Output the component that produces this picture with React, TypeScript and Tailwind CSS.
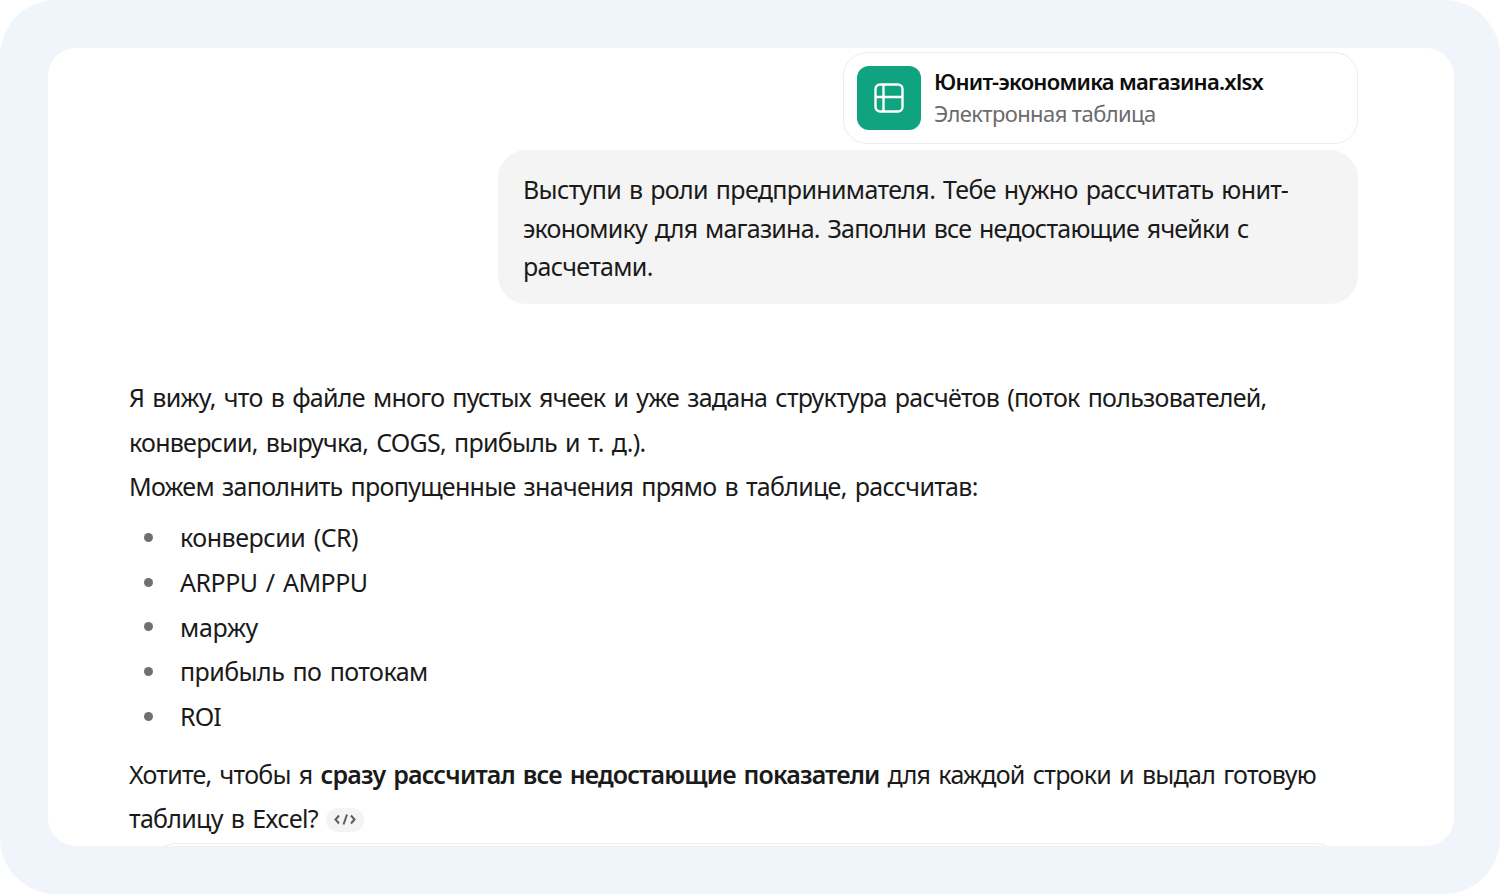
const items = [
  { text: "конверсии (CR)", cls: "tracking-[-0.46px]" },
  { text: "ARPPU / AMPPU", cls: "tracking-[-0.5px]" },
  { text: "маржу", cls: "tracking-[-0.3px]" },
  { text: "прибыль по потокам", cls: "tracking-[-0.55px]" },
  { text: "ROI", cls: "tracking-[-0.9px]" },
];

export default function App() {
  return (
    <div className="w-[1500px] h-[894px] bg-white overflow-hidden font-['Noto_Sans','Open_Sans',sans-serif] text-[#1a1a1a]">
      <div className="w-[1500px] h-[894px] rounded-[56px] bg-[#f0f5fb] pt-[48px] pl-[48px]">
        <div className="relative w-[1406px] h-[798px] rounded-[28px] bg-white overflow-hidden">
          <div className="flex flex-col items-end pr-[96px] pt-[4px]">
            <div className="w-[515px] h-[92px] rounded-[24px] border border-[#ececec] bg-white flex items-center pl-[13px] gap-[13px]">
              <div className="w-[64px] h-[64px] rounded-[12px] bg-[#10a37f] flex items-center justify-center">
                <svg width="32" height="32" viewBox="0 0 32 32" fill="none" stroke="#fff" strokeWidth="2.4">
                  <rect x="2.5" y="2.5" width="27" height="27" rx="4.5" />
                  <path d="M2.5 15H29.5M10.5 2.5V29.5" />
                </svg>
              </div>
              <div className="flex flex-col -mt-[2px]">
                <div className="text-[22px] leading-[32px] font-semibold tracking-[-0.73px] text-[#0d0d0d]">Юнит-экономика магазина.xlsx</div>
                <div className="text-[22px] leading-[32px] text-[#6b6b6b] tracking-[-0.6px]">Электронная таблица</div>
              </div>
            </div>
            <div className="w-[860px] h-[154px] mt-[6px] rounded-[28px] bg-[#f4f4f4] pl-[25px] pt-[20px] text-[25px] leading-[38.5px] [word-spacing:2px]">
              <span className="tracking-[-0.64px]">Выступи в роли предпринимателя. Тебе нужно рассчитать юнит-</span><br />
              <span className="tracking-[-0.77px]">экономику для магазина. Заполни все недостающие ячейки с</span><br />
              <span className="tracking-[-0.7px]">расчетами.</span>
            </div>
          </div>
          <div className="pl-[81px] pt-[71px] text-[25px] leading-[44.7px] tracking-[-0.72px] [word-spacing:2.3px]">
            <p>
              Я вижу, что в файле много пустых ячеек и уже задана структура расчётов (поток пользователей,<br />
              <span className="tracking-[-0.74px]">конверсии, выручка, COGS, прибыль и т. д.).</span><br />
              <span className="tracking-[-0.71px]">Можем заполнить пропущенные значения прямо в таблице, рассчитав:</span>
            </p>
            <ul className="mt-[6px]">
              {items.map((it) => (
                <li key={it.text} className={`flex items-center ${it.cls}`}>
                  <span className="w-[9px] h-[9px] ml-[15px] mr-[27px] rounded-full bg-[#707070]" />
                  <span>{it.text}</span>
                </li>
              ))}
            </ul>
            <p className="mt-[13px]">
              <span className="tracking-[-0.75px]">Хотите, чтобы я </span><b className="font-semibold tracking-[-0.85px]">сразу рассчитал все недостающие показатели</b><span className="tracking-[-0.74px]"> для каждой строки и выдал готовую</span><br />
              <span className="tracking-[-0.72px]">таблицу в Excel?</span>
              <span className="inline-flex align-middle items-center justify-center ml-[8px] -mt-[4px] w-[38px] h-[24px] rounded-full bg-[#f4f4f4]">
                <svg width="22" height="14" viewBox="0 0 22 14" fill="none" stroke="#5d5d5d" strokeWidth="2">
                  <path d="M5 2.5L1.5 6.5L5 10.5M17 2.5L20.5 6.5L17 10.5M13 1.5L9.5 11.5" />
                </svg>
              </span>
            </p>
          </div>
          <div className="absolute left-[104px] bottom-[-23px] w-[1188px] h-[26px] rounded-t-[24px] border border-[#ececec] bg-white" />
        </div>
      </div>
    </div>
  );
}
